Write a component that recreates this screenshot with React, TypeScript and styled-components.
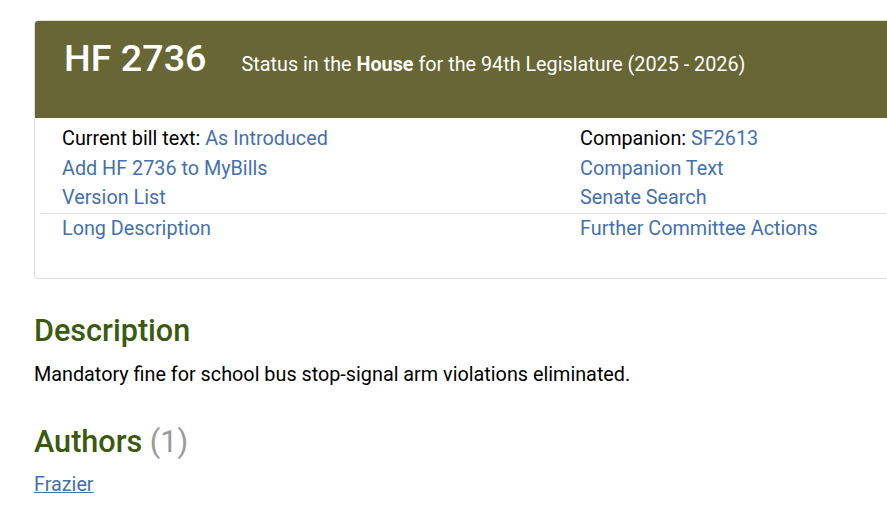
import React from "react";
import styled, { createGlobalStyle } from "styled-components";

const GlobalStyle = createGlobalStyle`
  html, body {
    margin: 0;
    padding: 0;
    background: #ffffff;
    overflow: hidden;
  }
  body {
    font-family: Roboto, "Liberation Sans", Arial, sans-serif;
    color: #000;
  }
`;

const Page = styled.div`
  padding: 20px 0 0 34px;
  width: 1200px;
`;

const Card = styled.section`
  width: 1050px;
  border: 1px solid #dddddd;
  border-radius: 4px;
  overflow: hidden;
`;

const CardHeader = styled.header`
  background: #676634;
  height: 97px;
  box-sizing: border-box;
  padding: 17px 0 0 29px;
  display: flex;
  align-items: baseline;
  color: #ffffff;
`;

const BillNumber = styled.h1`
  margin: 0;
  font-size: 37.7px;
  font-weight: 500;
  line-height: 40px;
`;

const StatusLine = styled.span`
  margin-left: 35px;
  font-size: 19.8px;
  font-weight: 400;
  b {
    font-weight: 700;
  }
`;

const CardBody = styled.div`
  padding: 6px 0 35px 6px;
  display: grid;
  grid-template-columns: 518px 518px;
`;

const Column = styled.ul`
  list-style: none;
  margin: 0;
  padding: 0;
`;

const Item = styled.li<{ $divided?: boolean }>`
  padding-left: 21px;
  font-size: 19.8px;
  line-height: 29.5px;
  border-top: ${(p) => (p.$divided ? "1px solid #dddddd" : "none")};
`;

const Link = styled.a<{ $underline?: boolean }>`
  color: #4570b0;
  text-decoration: ${(p) => (p.$underline ? "underline" : "none")};
`;

const SectionTitle = styled.h2`
  margin: 0;
  font-size: 30.6px;
  line-height: 36px;
  font-weight: 500;
  color: #3b5a10;
`;

const Count = styled.span`
  color: #9a9a9a;
  font-weight: 400;
`;

const Section = styled.section<{ $top: number }>`
  margin-top: ${(p) => p.$top}px;
`;

const Paragraph = styled.p<{ $gap: number }>`
  margin: ${(p) => p.$gap}px 0 0;
  font-size: 19.8px;
  line-height: 27px;
`;

export default function App() {
  return (
    <>
      <GlobalStyle />
      <Page>
        <Card>
          <CardHeader>
            <BillNumber>HF 2736</BillNumber>
            <StatusLine>
              Status in the <b>House</b> for the 94th Legislature (2025 - 2026)
            </StatusLine>
          </CardHeader>
          <CardBody>
            <Column>
              <Item>
                Current bill text: <Link href="#">As Introduced</Link>
              </Item>
              <Item>
                <Link href="#">Add HF 2736 to MyBills</Link>
              </Item>
              <Item>
                <Link href="#">Version List</Link>
              </Item>
              <Item $divided>
                <Link href="#">Long Description</Link>
              </Item>
            </Column>
            <Column>
              <Item>
                Companion: <Link href="#">SF2613</Link>
              </Item>
              <Item>
                <Link href="#">Companion Text</Link>
              </Item>
              <Item>
                <Link href="#">Senate Search</Link>
              </Item>
              <Item $divided>
                <Link href="#">Further Committee Actions</Link>
              </Item>
            </Column>
          </CardBody>
        </Card>
        <Section $top={34}>
          <SectionTitle>Description</SectionTitle>
          <Paragraph $gap={12}>
            Mandatory fine for school bus stop-signal arm violations eliminated.
          </Paragraph>
        </Section>
        <Section $top={36}>
          <SectionTitle>
            Authors <Count>(1)</Count>
          </SectionTitle>
          <Paragraph $gap={11}>
            <Link href="#" $underline>
              Frazier
            </Link>
          </Paragraph>
        </Section>
      </Page>
    </>
  );
}
